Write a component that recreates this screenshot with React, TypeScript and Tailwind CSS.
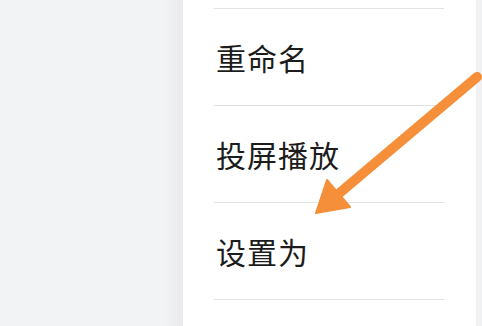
import React from "react";

const items = ["重命名", "投屏播放", "设置为"];

export default function App() {
  return (
    <div className="relative w-[482px] h-[326px] overflow-hidden flex bg-[#f2f3f5]" style={{ fontFamily: '"Noto Sans CJK SC", "Noto Sans", sans-serif' }}>
      <div className="w-[183px] h-full bg-gradient-to-r from-[#f2f3f5] from-90% to-[#e9eaec]" />
      <div className="w-[293px] h-full bg-white pl-[31px] pr-[32px]">
        <div className="h-[8px]" />
        <div className="h-px bg-[#e3e3e5]" />
        {items.map((t) => (
          <div key={t}>
            <div className="h-[96px] flex items-center pl-[2px] text-[30px] text-[#1c1c1c] leading-none tracking-[1px]">{t}</div>
            <div className="h-px bg-[#e3e3e5]" />
          </div>
        ))}
      </div>
      <div className="flex-1 h-full bg-[#f0f1f3]" />
      <svg className="absolute left-0 top-0" width="482" height="326" viewBox="0 0 482 326">
        <line x1="477" y1="77" x2="336" y2="196" stroke="#f58f3a" strokeWidth="10" strokeLinecap="round" />
        <polygon points="316,213 327,180 350,207" fill="#f58f3a" stroke="#f58f3a" strokeWidth="2" strokeLinejoin="round" />
      </svg>
    </div>
  );
}
